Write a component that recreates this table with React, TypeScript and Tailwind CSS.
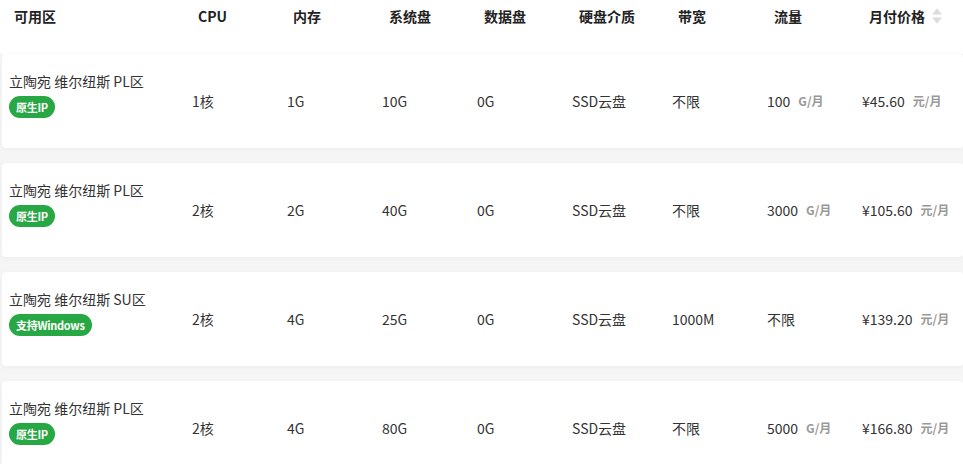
const rows = [
  { zone: '立陶宛 维尔纽斯 PL区', tag: '原生IP', cpu: '1核', mem: '1G', sys: '10G', data: '0G', disk: 'SSD云盘', bw: '不限', flow: '100', flowUnit: true, price: '¥45.60' },
  { zone: '立陶宛 维尔纽斯 PL区', tag: '原生IP', cpu: '2核', mem: '2G', sys: '40G', data: '0G', disk: 'SSD云盘', bw: '不限', flow: '3000', flowUnit: true, price: '¥105.60' },
  { zone: '立陶宛 维尔纽斯 SU区', tag: '支持Windows', cpu: '2核', mem: '4G', sys: '25G', data: '0G', disk: 'SSD云盘', bw: '1000M', flow: '不限', flowUnit: false, price: '¥139.20' },
  { zone: '立陶宛 维尔纽斯 PL区', tag: '原生IP', cpu: '2核', mem: '4G', sys: '80G', data: '0G', disk: 'SSD云盘', bw: '不限', flow: '5000', flowUnit: true, price: '¥166.80' },
];

const font = { fontFamily: '"Noto Sans CJK SC", "Noto Sans", sans-serif' };

function SortIcon() {
  return (
    <svg width="10" height="18" viewBox="0 0 10 18" className="ml-[7px]">
      <path d="M5 1.5 L10 7.5 H0 Z" fill="#dcdcdf" />
      <path d="M5 16.5 L10 10.5 H0 Z" fill="#dcdcdf" />
    </svg>
  );
}

export default function App() {
  return (
    <div className="w-[963px] h-[464px] overflow-hidden bg-white text-[#333]" style={font}>
      {/* Header */}
      <div className="flex h-[48px] items-center pb-[16px] text-[14px] font-bold text-[#222]">
        <div className="w-[198px] pl-[14px]">可用区</div>
        <div className="w-[95px]">CPU</div>
        <div className="w-[96px]">内存</div>
        <div className="w-[95px]">系统盘</div>
        <div className="w-[95px]">数据盘</div>
        <div className="w-[99px]">硬盘介质</div>
        <div className="w-[96px]">带宽</div>
        <div className="w-[95px]">流量</div>
        <div className="flex items-center">
          月付价格
          <SortIcon />
        </div>
      </div>

      {/* Rows */}
      <div className="mt-[6px] flex flex-col gap-[15px] bg-[#f5f5f6]">
        {rows.map((r, i) => (
          <div
            key={i}
            className="ml-[2px] flex h-[94px] rounded-[4px] bg-white text-[14px] shadow-[0_1px_4px_rgba(0,0,0,0.04)]"
          >
            <div className="w-[190px] pl-[7px] pt-[17px]">
              <div className="leading-[20px]">{r.zone}</div>
              <span className="mt-[5px] inline-flex h-[22px] items-center rounded-full bg-[#28a745] px-[7px] text-[11px] font-bold tracking-[-0.3px] text-white">
                {r.tag}
              </span>
            </div>
            <div className="flex w-[95px] items-center">{r.cpu}</div>
            <div className="flex w-[95px] items-center">{r.mem}</div>
            <div className="flex w-[95px] items-center">{r.sys}</div>
            <div className="flex w-[95px] items-center">{r.data}</div>
            <div className="flex w-[100px] items-center">{r.disk}</div>
            <div className="flex w-[95px] items-center">{r.bw}</div>
            <div className="flex w-[95px] items-center">
              {r.flow}
              {r.flowUnit && <span className="ml-[8px] text-[12px] font-bold text-[#999]">G/月</span>}
            </div>
            <div className="flex items-center">
              {r.price}
              <span className="ml-[8px] text-[12px] font-bold text-[#999]">元/月</span>
            </div>
          </div>
        ))}
      </div>
    </div>
  );
}
